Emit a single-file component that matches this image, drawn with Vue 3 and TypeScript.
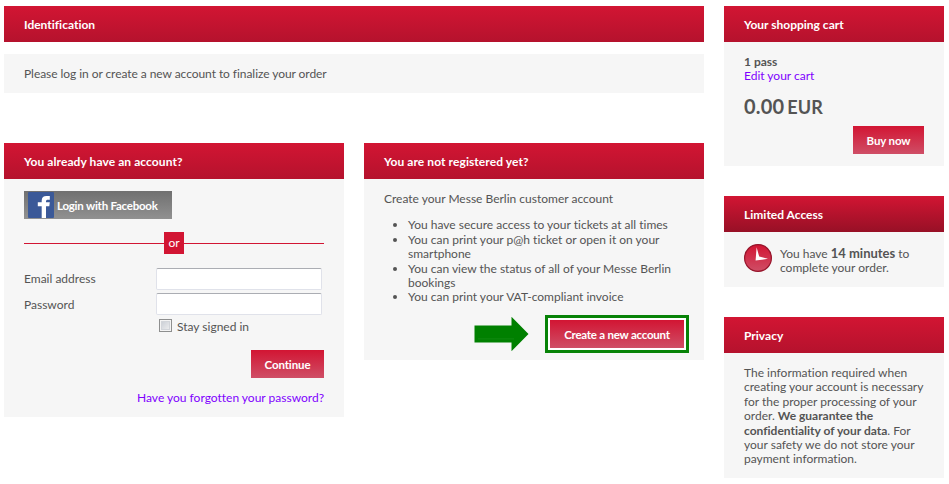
<script setup lang="ts">
import { ref } from 'vue'

const email = ref('')
const password = ref('')
const staySigned = ref(false)

const benefits: string[][] = [
  ['You have secure access to your tickets at all times'],
  ['You can print your p@h ticket or open it on your', 'smartphone'],
  ['You can view the status of all of your Messe Berlin', 'bookings'],
  ['You can print your VAT-compliant invoice'],
]
</script>

<template>
  <div class="page">
    <main class="main">
      <h2 class="head">Identification</h2>
      <p class="notice">Please log in or create a new account to finalize your order</p>
      <div class="columns">
        <section class="panel login">
          <h2 class="head h-login">You already have an account?</h2>
          <button class="facebook" type="button">
            <svg width="26" height="26" viewBox="0 0 26 26">
              <rect width="26" height="26" rx="1" fill="#3b5998" />
              <path d="M13.7 26V14.2H9.8V10.2H13.7V8.6C13.7 5.4 15.6 4 18.4 4H21.8V7.8H20C18.5 7.8 18 8.3 18 9.4V10.2H21.8L21.3 14.2H18V26Z" fill="#fff" />
            </svg>
            <span>Login with Facebook</span>
          </button>
          <div class="divider"><span>or</span></div>
          <form @submit.prevent>
            <label class="field"><span>Email address</span><input v-model="email" type="text" /></label>
            <label class="field"><span>Password</span><input v-model="password" type="password" /></label>
            <label class="stay"><input v-model="staySigned" type="checkbox" /><span>Stay signed in</span></label>
            <button class="btn continue" type="submit">Continue</button>
          </form>
          <a class="link forgot">Have you forgotten your password?</a>
        </section>
        <section class="panel register">
          <h2 class="head h-register">You are not registered yet?</h2>
          <p class="intro">Create your Messe Berlin customer account</p>
          <ul>
            <li v-for="(lines, i) in benefits" :key="i">
              <span v-for="line in lines" :key="line">{{ line }}</span>
            </li>
          </ul>
          <div class="create-row">
            <svg width="56" height="36" viewBox="0 0 56 36">
              <path d="M0.5 9.5H37.5V0.8L54.5 18L37.5 35.2V26.5H0.5Z" fill="#008000" />
              <path d="M4 22.9H40" stroke="#1c8d1c" stroke-width=".6" />
            </svg>
            <div class="highlight"><button class="btn create" type="button">Create a new account</button></div>
          </div>
        </section>
      </div>
    </main>
    <aside class="side">
      <section class="panel cart">
        <h2 class="head h-cart">Your shopping cart</h2>
        <div class="cart-body">
          <strong>1 pass</strong>
          <a class="link">Edit your cart</a>
          <div class="price"><span class="amount">0.00</span> <span class="currency">EUR</span></div>
          <button class="btn buy" type="button">Buy now</button>
        </div>
      </section>
      <section class="panel access">
        <h2 class="head dark">Limited Access</h2>
        <div class="access-body">
          <svg width="28" height="28" viewBox="0 0 28 28">
            <defs>
              <linearGradient id="clock" x1="0" y1="0" x2="0" y2="1">
                <stop offset="0" stop-color="#d21533" />
                <stop offset="1" stop-color="#cf4e66" />
              </linearGradient>
            </defs>
            <circle cx="14" cy="14" r="13.4" fill="url(#clock)" stroke="#96142a" stroke-width="1.2" />
            <path d="M12.6 3.2L15.2 12.6L24 14.8L11.6 16.6Z" fill="#fff" />
          </svg>
          <p>You have <strong>14 minutes</strong> to<br />complete your order.</p>
        </div>
      </section>
      <section class="panel privacy">
        <h2 class="head">Privacy</h2>
        <p>
          The information required when<br />creating your account is necessary<br />for the proper processing of your<br />order.
          <strong>We guarantee the<br />confidentiality of your data</strong>. For<br />your safety we do not store your<br />payment information.
        </p>
      </section>
    </aside>
  </div>
</template>

<style>
body { background: #fff; }
</style>

<style scoped>
.page {
  box-sizing: border-box;
  width: 949px;
  height: 484px;
  padding: 6px 5px 0 4px;
  display: flex;
  gap: 20px;
  overflow: hidden;
  font: 12px/14.4px Lato, "Liberation Sans", sans-serif;
  font-variant-ligatures: none;
  color: #545454;
  white-space: nowrap;
}
p, h2, ul { margin: 0; padding: 0; }
button, input { margin: 0; font-family: inherit; font-variant-ligatures: none; }
.main { width: 700px; }
.side { width: 220px; display: flex; flex-direction: column; gap: 30px; }
.head {
  height: 36px;
  padding-left: 20px;
  font-size: 12px;
  font-weight: 700;
  line-height: 37px;
  color: #fff;
  background: linear-gradient(#d21533, #b5122d);
}
.h-login, .h-register { letter-spacing: .08px; }
.head.dark { background: linear-gradient(#d21533, #971026); }
.notice { margin-top: 12px; height: 39px; padding-left: 20px; line-height: 40px; letter-spacing: -.06px; background: #f6f6f6; }
.columns { margin-top: 50px; display: flex; align-items: flex-start; gap: 20px; }
.panel { background: #f6f6f6; }
.login { width: 340px; height: 274px; display: flex; flex-direction: column; }
.facebook {
  display: flex;
  align-items: center;
  gap: 3px;
  width: 148px;
  height: 28px;
  margin: 12px 0 0 20px;
  padding: 0 0 0 4px;
  border: 0;
  color: #fff;
  font-size: 11.5px;
  font-weight: 700;
  letter-spacing: -.23px;
  background: linear-gradient(#707070, #919191);
}
.facebook span { padding-top: 1px; }
.divider {
  display: flex;
  align-items: center;
  margin: 13px 20px 0;
  height: 22px;
}
.divider::before, .divider::after { content: ""; flex: 1; height: 1px; background: #d21533; }
.divider span { width: 20px; height: 22px; line-height: 22px; text-align: center; color: #fff; background: #d21533; }
form { display: flex; flex-direction: column; margin: 14px 20px 0; }
.field { display: flex; height: 22px; margin-bottom: 3px; }
.field span { width: 132px; line-height: 21px; }
.field + .field span { line-height: 23px; }
.field input {
  box-sizing: border-box;
  width: 166px;
  height: 22px;
  border: 1px solid #e0e2ea;
  border-top-color: #abadb3;
  border-radius: 2px;
  background: #fff;
}
.stay { display: flex; align-items: center; gap: 5px; margin: 0 0 0 135px; height: 16px; }
.stay span { padding-top: 2px; }
.stay input {
  box-sizing: border-box;
  appearance: none;
  width: 13px;
  height: 13px;
  margin-top: -1px;
  border: 1px solid #8e8f8f;
  background: linear-gradient(135deg, #c4c9d1, #f3f3f3);
  box-shadow: inset 0 0 0 1px #f4f4f4, inset 0 0 0 2px #d2d5da;
}
.btn {
  height: 28px;
  padding: 0;
  border: 0;
  font-size: 11.5px;
  font-weight: 700;
  letter-spacing: -.23px;
  line-height: 30px;
  color: #fff;
  background: linear-gradient(#d21533, #cf4e66);
}
.continue { width: 73px; margin: 16px 0 0; align-self: flex-end; letter-spacing: -.12px; }
.link { color: #7f00ff; }
.forgot { margin: 13px 20px 0 0; align-self: flex-end; }
.register { width: 340px; height: 217px; }
.intro { padding: 13px 0 0 20px; }
ul { margin-top: 12px; padding-left: 44px; }
li span { display: block; }
.create-row { display: flex; align-items: center; gap: 15px; margin: 10px 14px 0 110px; }
.create-row svg { flex: none; }
.highlight { flex: none; padding: 2px; border: 3px solid #078307; background: #fff; }
.create { display: block; width: 134px; }
.cart { height: 160px; }
.cart-body { display: flex; flex-direction: column; padding: 13px 20px 0; }
.price { margin-top: 10px; height: 24px; line-height: 24px; font-weight: 700; }
.amount { font-size: 20px; letter-spacing: .2px; }
.currency { font-size: 18px; letter-spacing: .1px; }
.buy { width: 71px; margin-top: 8px; align-self: flex-end; letter-spacing: -.12px; }
.access { height: 91px; }
.access-body { display: flex; gap: 8px; padding: 12px 20px 0; }
.access-body p { padding-top: 2px; }
.access-body strong { font-size: 13px; line-height: 14px; }
.privacy { height: 161px; }
.privacy p { padding: 13px 20px 0; }
</style>
